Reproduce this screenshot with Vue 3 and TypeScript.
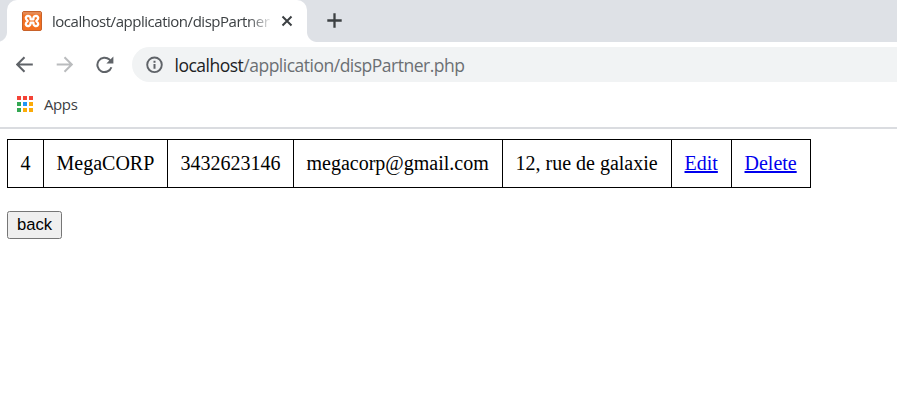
<script setup lang="ts">
interface Cell {
  text: string
  width: number
  link?: boolean
}

const cells: Cell[] = [
  { text: '4', width: 36 },
  { text: 'MegaCORP', width: 124 },
  { text: '3432623146', width: 126 },
  { text: 'megacorp@gmail.com', width: 209 },
  { text: '12, rue de galaxie', width: 169 },
  { text: 'Edit', width: 60, link: true },
  { text: 'Delete', width: 80, link: true },
]

const dots: string[] = [
  '#f44336', '#f44336', '#f44336',
  '#34a853', '#2196f3', '#fbab09',
  '#34a853', '#fbab09', '#fbab09',
]
</script>

<template>
  <div class="browser">
    <div class="tabs">
      <div class="tab">
        <svg class="favicon" width="20" height="20" viewBox="0 0 20 20">
          <rect x="0.5" y="0.5" width="19" height="19" rx="1.5" fill="#f37021" stroke="#c8622a" />
          <path d="M1 1h18v2.5H1z" fill="#e58a55" />
          <path
            d="M7.2 5.2C4.6 4.4 3.3 6.1 4 7.9L5.7 10 4 12.1c-.7 1.8.6 3.5 3.2 2.7 1.4-.3 1.4-2.4 1.4-3.2h2.8c0 .8 0 2.9 1.4 3.2 2.6.8 3.9-.9 3.2-2.7L14.3 10 16 7.9c.7-1.8-.6-3.5-3.2-2.7-1.4.3-1.4 2.4-1.4 3.2H8.6c0-.8 0-2.9-1.4-3.2z"
            fill="none" stroke="#fff" stroke-width="2.3" stroke-linejoin="round"
          />
        </svg>
        <span class="title">localhost/application/dispPartner</span>
        <svg class="close" width="12" height="12" viewBox="0 0 12 12">
          <path d="M1.5 1.5l9 9M10.5 1.5l-9 9" stroke="#3c4043" stroke-width="2" />
        </svg>
      </div>
      <svg class="plus" width="15" height="15" viewBox="0 0 15 15">
        <path d="M7.5 .3v14.4M.3 7.5h14.4" stroke="#3c4043" stroke-width="2.3" />
      </svg>
    </div>

    <div class="toolbar">
      <svg class="nav" width="18" height="18" viewBox="0 0 18 18">
        <path d="M16.8 8.5H1.5M8.5 1.2L1.2 8.5 8.5 15.8" fill="none" stroke="#5f6368" stroke-width="2" />
      </svg>
      <svg class="nav" width="18" height="18" viewBox="0 0 18 18">
        <path d="M.7 8.5H16M8.5 1.2L15.8 8.5 8.5 15.8" fill="none" stroke="#babcbe" stroke-width="2" />
      </svg>
      <svg class="nav" width="18" height="18" viewBox="0 0 18 18">
        <path d="M15.4 11.2A7.2 7.2 0 1 1 13.5 3.6L15.1 5.2" fill="none" stroke="#5f6368" stroke-width="2" />
        <path d="M17.4 .6v7h-7z" fill="#5f6368" />
      </svg>
      <div class="omnibox">
        <svg width="18" height="18" viewBox="0 0 18 18">
          <circle cx="8.5" cy="8.8" r="7.3" fill="none" stroke="#5f6368" stroke-width="1.9" />
          <path d="M8.5 8v4.8M8.5 4.8v2" stroke="#5f6368" stroke-width="2" />
        </svg>
        <span class="url"><span class="host">localhost</span>/application/dispPartner.php</span>
      </div>
    </div>

    <div class="bookmarks">
      <div class="apps-icon">
        <i v-for="(color, i) in dots" :key="i" :style="{ background: color }"></i>
      </div>
      <span class="apps">Apps</span>
    </div>

    <main>
      <div class="row">
        <div v-for="cell in cells" :key="cell.text" class="cell" :style="{ width: cell.width + 'px' }">
          <a v-if="cell.link" href="#">{{ cell.text }}</a>
          <span v-else>{{ cell.text }}</span>
        </div>
      </div>
      <button type="button">back</button>
    </main>
  </div>
</template>

<style>
body {
  background: #fff;
  overflow: hidden;
}
</style>

<style scoped>
.browser {
  height: 416px;
  overflow: hidden;
  font-family: "Open Sans", "Noto Sans", sans-serif;
}
svg {
  display: block;
  flex: none;
}
.tabs {
  display: flex;
  height: 42px;
  padding-left: 7px;
  background: #dee1e6;
}
.tab {
  position: relative;
  display: flex;
  align-items: center;
  box-sizing: border-box;
  width: 300px;
  padding-left: 15px;
  background: #fff;
  border-radius: 10px 10px 0 0;
}
.tab::before,
.tab::after {
  content: "";
  position: absolute;
  bottom: 0;
  width: 10px;
  height: 10px;
}
.tab::before {
  left: -10px;
  background: radial-gradient(circle at 0 0, transparent 9.5px, #fff 10.5px);
}
.tab::after {
  right: -10px;
  background: radial-gradient(circle at 100% 0, transparent 9.5px, #fff 10.5px);
}
.title {
  width: 219px;
  margin-left: 10px;
  overflow: hidden;
  white-space: nowrap;
  font-size: 15px;
  line-height: 24px;
  letter-spacing: -0.47px;
  color: #3c4043;
  -webkit-mask-image: linear-gradient(to right, #000 196px, transparent 221px);
  mask-image: linear-gradient(to right, #000 196px, transparent 221px);
}
.close {
  margin-left: 10px;
}
.plus {
  margin: 13px 0 0 20px;
}
.toolbar {
  display: flex;
  align-items: center;
  height: 45px;
  padding-left: 16px;
}
.nav {
  margin-right: 22px;
}
.omnibox {
  display: flex;
  align-items: center;
  flex: 1;
  height: 35px;
  margin-left: -4px;
  padding-left: 14px;
  background: #f1f3f4;
  border-radius: 18px 0 0 18px;
}
.url {
  margin-left: 10.5px;
  font-size: 17.5px;
  letter-spacing: -0.5px;
  white-space: nowrap;
  color: #6b6f73;
}
.host {
  color: #202124;
}
.bookmarks {
  display: flex;
  align-items: center;
  box-sizing: border-box;
  height: 42px;
  padding: 0 0 6px 17px;
  border-bottom: 2px solid #dadce0;
}
.apps-icon {
  display: grid;
  grid-template-columns: repeat(3, 4px);
  grid-auto-rows: 4px;
  gap: 2px;
}
.apps {
  margin-left: 11px;
  font-size: 15px;
  letter-spacing: -0.4px;
  color: #3c4043;
}
main {
  padding: 10px 0 0 7px;
}
.row {
  display: flex;
  box-sizing: border-box;
  width: 804px;
  height: 49px;
  border: solid #000;
  border-width: 1px 0;
  font: 20px/47px "Liberation Serif", serif;
  color: #000;
}
.cell {
  box-sizing: border-box;
  flex: none;
  padding-left: 12.5px;
  border-left: 1px solid #000;
  white-space: nowrap;
}
.cell:last-child {
  border-right: 1px solid #000;
}
a {
  color: #0000ee;
}
button {
  display: block;
  box-sizing: border-box;
  width: 55px;
  height: 28px;
  margin-top: 23px;
  padding: 0;
  border: 1px solid #767676;
  border-radius: 2.5px;
  background: #efefef;
  color: #000;
  font: 16.67px/26px "Liberation Sans", sans-serif;
}
</style>
